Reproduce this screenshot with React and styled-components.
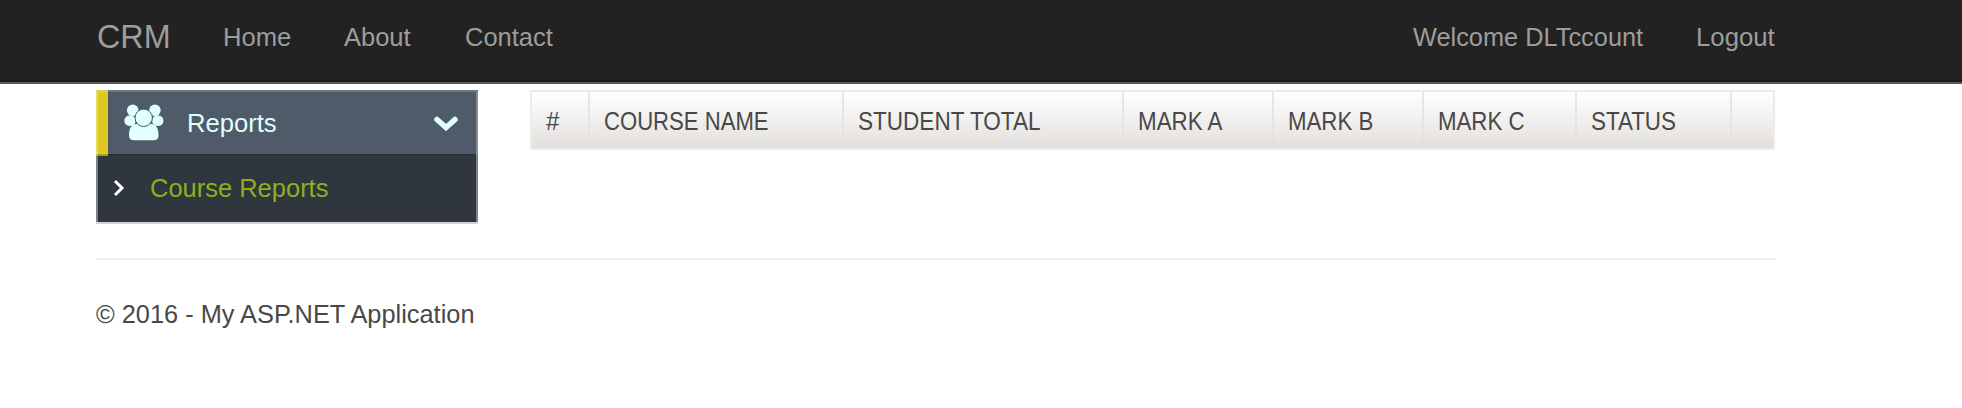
import React from "react";
import styled, { createGlobalStyle } from "styled-components";

const GlobalStyle = createGlobalStyle`
  * { box-sizing: border-box; }
  body {
    margin: 0;
    background: #fff;
    color: #484848;
    font: 26px/36px "Liberation Sans", Arial, sans-serif;
  }
`;

const Fit = styled.span`
  display: block;
  white-space: nowrap;
  transform: scaleX(${(p) => p.$x || 1});
  transform-origin: left center;
`;

const Navbar = styled.header`
  height: 84px;
  background: #222;
  border-bottom: 2px solid #595959;
  box-shadow: inset 0 -2px 0 #1b1b1b;
`;

const Container = styled.div`
  width: 1679px;
  margin-left: 96px;
`;

const NavRow = styled(Container)`
  display: flex;
  height: 82px;
  padding: 19px 0 0 1px;
  color: #9d9d9d;
`;

const Brand = styled.a`
  width: 126px;
  font-size: 33px;
  line-height: 36px;
`;

const NavItem = styled.a`
  width: ${(p) => p.$w}px;
`;

const NavRight = styled.div`
  display: flex;
  margin-left: auto;
`;

const Main = styled(Container)`
  display: flex;
  align-items: flex-start;
  gap: 52px;
  padding-top: 6px;
`;

const Sidebar = styled.nav`
  width: 382px;
  height: 134px;
  flex: none;
  background: #2f363e;
  border-bottom: 2px solid #d2d4d6;
`;

const MenuHead = styled.div`
  display: flex;
  height: 66px;
  background: linear-gradient(#4f5b69 64px, #2b3138 64px);
  box-shadow: inset 0 2px 0 #6c7783, inset -2px 0 0 #858e98;
  color: #e1ffff;
`;

const Accent = styled.div`
  width: 12px;
  background: #dfc824;
  border-left: 2px solid #e8d868;
  border-top: 2px solid #e3d04a;
  border-bottom: 2px solid #ab9a22;
`;

const UsersIcon = styled.svg`
  width: 40px;
  height: 38px;
  margin: 14px 0 0 16px;
`;

const MenuTitle = styled.div`
  flex: 1;
  padding: 15px 0 0 23px;
`;

const ChevronDown = styled.svg`
  width: 26px;
  height: 18px;
  margin: 25px 19px 0 0;
`;

const SubItem = styled.div`
  display: flex;
  height: 66px;
  padding-top: 14px;
  box-shadow: inset 2px 0 0 #7c8187, inset -2px 0 0 #7c8187;
  color: #8db01c;
`;

const ChevronRight = styled.svg`
  width: 12px;
  height: 18px;
  margin: 9px 25px 0 17px;
`;

const Table = styled.div`
  display: flex;
  width: 1245px;
  height: 60px;
  border: 2px solid #ebebea;
  background: linear-gradient(#fff 0%, #f8f7f7 25%, #edebe9 65%, #e2dedb 100%);
`;

const HeadCell = styled.div`
  width: ${(p) => p.$w}px;
  padding: 11px 0 0 14px;
  border-right: ${(p) => (p.$last ? 0 : 2)}px solid;
  border-image: linear-gradient(#e8e5e3, #e6e3e0 70%, #e2dedb) 1;
`;

const Rule = styled.hr`
  height: 2px;
  margin: 34px 0 36px;
  border: 0;
  background: #eee;
`;

const columns = [
  { label: "#", w: 58, x: 0.93 },
  { label: "COURSE NAME", w: 254, x: 0.85 },
  { label: "STUDENT TOTAL", w: 280, x: 0.867 },
  { label: "MARK A", w: 150, x: 0.86 },
  { label: "MARK B", w: 150, x: 0.855 },
  { label: "MARK C", w: 153, x: 0.855 },
  { label: "STATUS", w: 155, x: 0.86 },
  { label: "", w: 41, x: 1 },
];

export default function App() {
  return (
    <>
      <GlobalStyle />
      <Navbar>
        <NavRow>
          <Brand><Fit $x={0.98}>CRM</Fit></Brand>
          <NavItem $w={121}><Fit $x={0.985}>Home</Fit></NavItem>
          <NavItem $w={121}><Fit $x={0.98}>About</Fit></NavItem>
          <NavItem $w={90}><Fit $x={0.98}>Contact</Fit></NavItem>
          <NavRight>
            <NavItem $w={283}><Fit $x={0.975}>Welcome DLTccount</Fit></NavItem>
            <NavItem $w={79}><Fit $x={0.99}>Logout</Fit></NavItem>
          </NavRight>
        </NavRow>
      </Navbar>
      <Main>
        <Sidebar>
          <MenuHead>
            <Accent />
            <UsersIcon viewBox="0 0 40 38" fill="#e1ffff">
              <circle cx="8.7" cy="6.3" r="5.8" />
              <circle cx="30.9" cy="6.3" r="5.8" />
              <rect x="0.400" y="11.500" width="11.200" height="10.500" rx="5" />
              <rect x="28.200" y="11.500" width="11.200" height="10.500" rx="5" />
              <path d="M12 20C7 20.500 5 25 5 31C5 34.500 6.500 36.200 10 36.200H29.500C33 36.200 34.500 34.500 34.500 31C34.500 25 32.500 20.500 27.500 20Z" />
              <circle cx="19.700" cy="13.800" r="8.700" stroke="#4f5b69" strokeWidth="1" />
            </UsersIcon>
            <MenuTitle><Fit $x={0.985}>Reports</Fit></MenuTitle>
            <ChevronDown viewBox="0 0 26 18">
              <path d="M4 4.500L13 12.500L22 4.500" fill="none" stroke="#e1ffff" strokeWidth="5.500" strokeLinecap="round" />
            </ChevronDown>
          </MenuHead>
          <SubItem>
            <ChevronRight viewBox="0 0 12 18">
              <path d="M2 2L9 9L2 16" fill="none" stroke="#fff" strokeWidth="3" />
            </ChevronRight>
            <Fit $x={0.98}>Course Reports</Fit>
          </SubItem>
        </Sidebar>
        <Table>
          {columns.map((c, i) => (
            <HeadCell key={i} $w={c.w} $last={i === columns.length - 1}>
              <Fit $x={c.x}>{c.label}</Fit>
            </HeadCell>
          ))}
        </Table>
      </Main>
      <Container as="footer">
        <Rule />
        <Fit $x={0.975}>© 2016 - My ASP.NET Application</Fit>
      </Container>
    </>
  );
}
